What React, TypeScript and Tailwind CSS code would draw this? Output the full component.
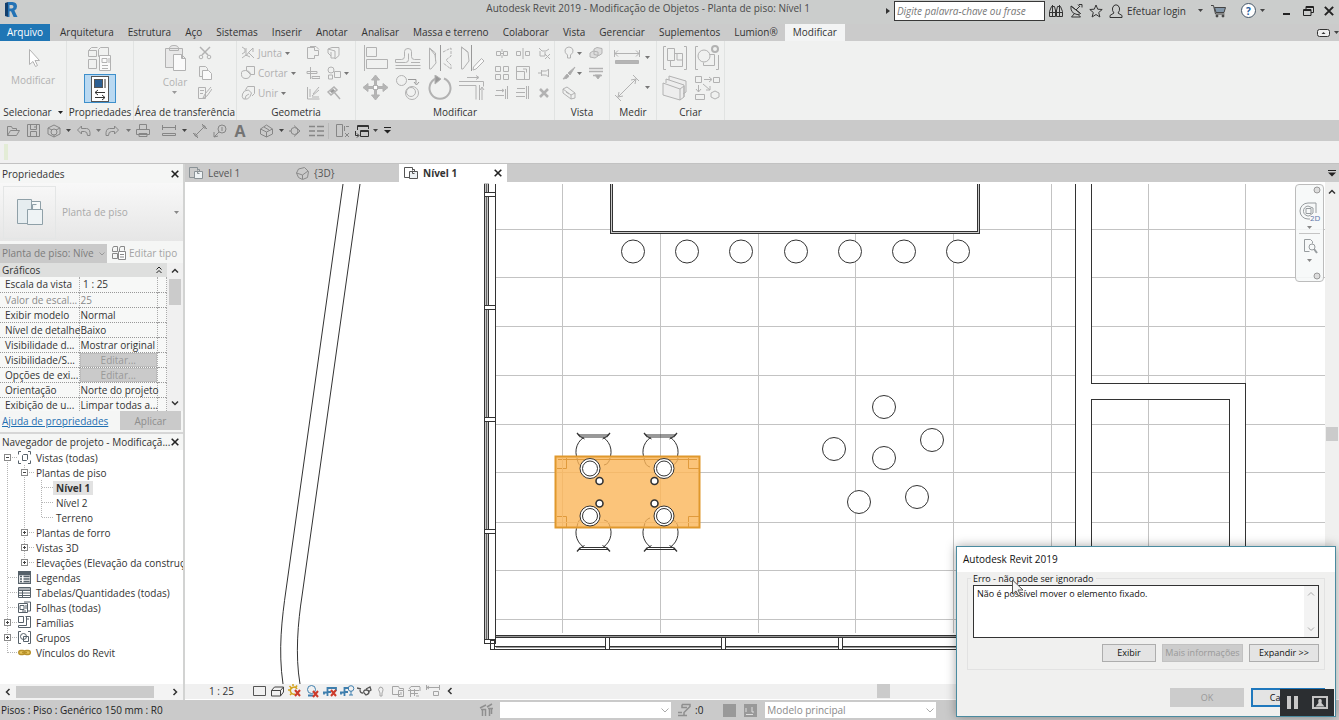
import type { ReactNode } from 'react'

type IconProps = {
  w?: number
  h?: number
  stroke?: string
  fill?: string
  sw?: number
  children: ReactNode
}

function Ic({ w = 16, h = 16, stroke = '#b2b2b2', fill = 'none', sw = 1, children }: IconProps) {
  return (
    <svg
      width={w}
      height={h}
      viewBox={`0 0 ${w} ${h}`}
      stroke={stroke}
      fill={fill}
      strokeWidth={sw}
      className="block shrink-0"
      aria-hidden="true"
    >
      {children}
    </svg>
  )
}

function Caret({ color = '#444444' }: { color?: string }) {
  return (
    <Ic w={5} h={3} stroke="none" fill={color}>
      <path d="M0 0h5L2.5 3z" />
    </Ic>
  )
}

function Close({ size = 8 }: { size?: number }) {
  return (
    <svg width={size} height={size} viewBox="0 0 8 8" stroke="#222" strokeWidth="1.6" aria-hidden="true">
      <path d="M.7.7l6.6 6.6M7.3.7L.7 7.3" />
    </svg>
  )
}

function PlanIcon({ stroke = '#8a9296' }: { stroke?: string }) {
  return (
    <Ic w={14} h={14} stroke={stroke}>
      <path d="M5.5 11.5h-5v-10h8v3M8.5 3.500h2v2" />
      <path d="M5.500 5.500h8v7h-8zM8.500 5.500v2h2" fill="#eef2f4" />
    </Ic>
  )
}

/* ---------- title bar ---------- */

function TitleBar() {
  return (
    <header className="flex h-6 shrink-0 items-start bg-[#cbcdcc]">
      <svg width="14" height="16" viewBox="0 0 14 16" className="mt-0.5 ml-1" aria-hidden="true">
        <path d="M1 1l3-1v15l-3-1z" fill="#123f6d" />
        <path d="M4 0h4.500q4.500.3 4.500 4.500 0 3-2.600 4L13.500 15H9.600L7 9.300H5.500V15H4zM5.500 3v3.500h2.300q1.700-.2 1.700-1.800T7.800 3z" fill="#2473b5" fillRule="evenodd" />
      </svg>
      <h1 className="flex-1 truncate pr-[76px] text-right leading-4 text-[#4a4a4a]">
        Autodesk Revit 2019 - Modificação de Objetos - Planta de piso: Nível 1
      </h1>
      <div className="flex h-[21px] items-center">
        <Ic w={4} h={6} stroke="none" fill="#333">
          <path d="M0 0l4 3-4 3z" />
        </Ic>
        <input
          type="text"
          aria-label="Pesquisar"
          placeholder="Digite palavra-chave ou frase"
          className="mt-px ml-1 h-5 w-[151px] border border-[#383838] bg-white px-0.5 italic placeholder:text-[#777]"
        />
        <button aria-label="Pesquisar" className="ml-1">
          <Ic w={14} h={14} stroke="#333">
            <path d="M.5 12.500v-5l2-5h3l1 4v6zM13.500 12.500v-5l-2-5h-3l-1 4v6zM.5 8.500h6M7.500 8.500h6M3.500 1v11M10.500 1v11M6 6.500h2" />
          </Ic>
        </button>
        <button aria-label="Comunicação" className="ml-1.5">
          <Ic w={14} h={14} stroke="#333">
            <path d="M2 2q-1 7 6 8.500 3 0 3.500-1zM2 2l9.500 7.500M7 6l4-4M10 .5h3v3M9 .5L11 3M5.500 9.500L2.500 13h9L9 10.500" />
          </Ic>
        </button>
        <button aria-label="Favoritos" className="ml-1.5">
          <Ic w={14} h={14} stroke="#333">
            <path d="M7 1l1.700 4.200 4.500.3-3.500 3 1.200 4.500L7 10.500 3.100 13l1.200-4.500-3.500-3 4.500-.3z" />
          </Ic>
        </button>
        <button className="ml-1.5 flex items-center gap-1 text-[#333]">
          <Ic w={14} h={14} stroke="#333">
            <path d="M5 9Q3 7 3.500 4 4.500.8 7 .8T10.500 4Q11 7 9 9M5 9l-4 2.500V13.500h12V11.500L9 9" />
          </Ic>
          Efetuar login
        </button>
        <button aria-label="Opções de login" className="ml-3">
          <Caret />
        </button>
        <button aria-label="Loja" className="ml-2">
          <Ic w={16} h={14} stroke="#444">
            <path d="M0 1.500h2.500l2 8.500h9" />
            <path d="M3.500 3.500h11l-1.500 5H5z" fill="#8296a8" />
            <circle cx="6" cy="12" r="1" fill="#333" />
            <circle cx="12" cy="12" r="1" fill="#333" />
          </Ic>
        </button>
        <button
          aria-label="Ajuda"
          className="ml-3.5 flex size-[15px] items-center justify-center rounded-full border border-[#445566] bg-white font-bold leading-none text-[#1d5c9c]"
        >
          ?
        </button>
        <button aria-label="Opções de ajuda" className="ml-1">
          <Caret />
        </button>
        <button aria-label="Minimizar" className="ml-[18px]">
          <Ic w={8} h={10} stroke="#222" sw={2}>
            <path d="M0 8h7" />
          </Ic>
        </button>
        <button aria-label="Restaurar" className="ml-3">
          <Ic w={11} h={10} stroke="#222">
            <path d="M3 4V.5h7.500v6H8M3 1.500h7M.5 3.500H8v6H.5zM.5 4.500H8" />
          </Ic>
        </button>
        <button aria-label="Fechar" className="mr-[5px] ml-2.5">
          <Close size={10} />
        </button>
      </div>
    </header>
  )
}

const tabs = [
  'Arquitetura', 'Estrutura', 'Aço', 'Sistemas', 'Inserir', 'Anotar', 'Analisar', 'Massa e terreno',
  'Colaborar', 'Vista', 'Gerenciar', 'Suplementos', 'Lumion®',
]

function RibbonTabs() {
  return (
    <nav className="flex h-[17px] shrink-0 items-stretch bg-[#cbcbcb] text-[#333]">
      <button className="w-[50px] bg-[#1f76b5] pb-0.5 text-white">Arquivo</button>
      <div className="flex pl-[3px]">
        {tabs.map((t) => (
          <button key={t} className="px-[7px] pb-0.5">
            {t}
          </button>
        ))}
        <button className="bg-[#f3f4f4] px-2 pb-0.5">Modificar</button>
      </div>
      <button aria-label="Minimizar faixa" className="ml-auto flex items-center gap-1">
        <Ic w={13} h={9} stroke="#333">
          <rect x=".5" y="1.500" width="12" height="7" rx="2" fill="#eee" />
          <path d="M4.500 6h4l-2-2z" fill="#333" stroke="none" />
        </Ic>
        <Caret />
      </button>
    </nav>
  )
}

/* ---------- ribbon ---------- */

function Panel({ label, width, caret, children }: { label: string; width: string; caret?: boolean; children: ReactNode }) {
  return (
    <section className={`flex shrink-0 flex-col border-r border-[#e1e3e2] ${width}`}>
      <div className="flex h-[63px] justify-center pt-0.5">{children}</div>
      <div className="flex h-4 items-center justify-center gap-1.5 whitespace-nowrap text-[#333]">
        {label}
        {caret && <Caret color="#222" />}
      </div>
    </section>
  )
}

function Tool({ label, size = 'size-5', children }: { label: string; size?: string; children: ReactNode }) {
  return (
    <button aria-label={label} className={`flex items-center justify-center ${size}`}>
      {children}
    </button>
  )
}

const bigTools: [string, ReactNode][] = [
  ['Alinhar', <path d="M1.500 0v26M3.500 2.500h10v9h-10zM3.500 14.500h21v9h-21z" />],
  ['Deslocamento', <path d="M.5 14.500h6q3 0 3-3v-5q0-3 3.500-3t3.500 3v5q0 3 3 3h6M.5 14.500v3h10q3 0 3-3v-6M.5 20.500h25M.5 23.500h25M16 17.500h9" />],
  ['Espelhar eixo', <><path d="M2.500 3v21h1.500l5-6-1-8zM2.500 3l6 5v8" /><path d="M13.500 0v26" stroke="#999" /><path d="M16 7l8-4v8l-5 4 5 5v4l-8-6" strokeDasharray="3 1" /></>],
  ['Espelhar desenho', <><path d="M2.500 2v22h1.500l6-8-1-9zM2.500 2l6 5" /><path d="M12.500 0v26" stroke="#999" /><path d="M14.500 22l8-8.500 2.500 2.500-8 8-3 1z" fill="#fafafa" /></>],
  ['Mover', <><path d="M12.500 0l4 5h-3v5h-2V5h-3zM12.500 25l4-5h-3v-5h-2v5h-3zM0 12.500l5-4v3h5v2H5v3zM25 12.500l-5-4v3h-5v2h5v3z" fill="#b5b5b5" /><rect x="10.500" y="10.500" width="4" height="4" fill="#fff" /></>],
  ['Copiar', <><circle cx="6.500" cy="5.500" r="5" /><path d="M13 4.500h8v4M19 7l2.500 3L24 7" stroke="#999" /><circle cx="17" cy="18" r="6.500" /><circle cx="16" cy="17" r="4.500" /></>],
  ['Rotacionar', <><path d="M9 3.500a10.500 10.500 0 1 0 8 0" strokeWidth="2" /><path d="M8 0l6 4-6 5z" fill="#999" /></>],
  ['Aparar', <path d="M8 2.500h11M17 .5l3 2-3 2M0 6.500h24.500v5M0 10.500h17v14M20.500 10v15M23 25V13M21 15l2-3 2 3" />],
]

const smallTools: [string, ReactNode][] = [
  ['Dividir', <path d="M1.500 5.500h4v4h-4zM8.500 5.500h4v4h-4zM5.500 7.500h3M7 3v3M7 9v3" />],
  ['Dividir com folga', <path d="M.5 5.500h4v4h-4zM9.500 5.500h4v4h-4zM7 2v11" />],
  ['Desafixar', <path d="M2 2l3 3h4l3-2M3 5v5h5V6M8 8l5 5M13 8l-5 5" />],
  ['Matriz', <path d="M.5.5h5v5h-5zM8.500.5h5v5h-5zM.5 8.500h5v5h-5zM8.500 8.500h5v5h-5z" />],
  ['Escala', <path d="M.5.5h13v13H.5zM.5 5.500h8v8M10.500 3v3.500M10.500 3H7" />],
  ['Fixar', <path d="M1 7h3M4.500 4v6M4.500 5h5l2-2v8l-2-2h-5" />],
  ['Aparar único', <path d="M1 4.500h8M7 3l2 1.500L7 6M0 9.500h9M12.500 0v13M10.500 3v10" />],
  ['Aparar múltiplo', <path d="M1 2.500h8M0 6.500h9M0 10.500h9M12.500 0v13M10.500 0v13" />],
  ['Excluir', <path d="M3 3l8 8M11 3l-8 8" strokeWidth="2.500" />],
]

function Ribbon() {
  return (
    <div className="flex h-[79px] shrink-0 bg-[#f0f1f0]">
      <Panel label="Selecionar" width="w-[67px]" caret>
        <button className="flex w-full flex-col items-center pt-1 text-[#b2b2b2]">
          <Ic w={16} h={24}>
            <path d="M4.500 2.500v15l3.500-3 2.500 5 2-1-2.500-5h4.500z" fill="#fff" />
          </Ic>
          <span className="mt-0.5">Modificar</span>
        </button>
      </Panel>
      <Panel label="Propriedades" width="w-[67px]">
        <div className="flex flex-col items-center gap-px pt-0.5">
          <Tool label="Propriedades de tipo" size="h-7 w-8">
            <Ic w={26} h={26}>
              <path d="M1.500 4.500h8v6h-8zM1.500 13.500h8v9h-8zM11.500 3.500l2-2h8v8M11.500 3.500v7h3M1.500 4.500l3-3h6" />
              <path d="M12.500 9.500h11v15h-11z" fill="#fafafa" />
              <path d="M15 12.500h5v4h-5zM15 19.500h6M15 22.500h6M22 12v5" />
            </Ic>
          </Tool>
          <button aria-label="Propriedades" className="flex h-[29px] w-8 items-center justify-center border border-[#3d8fcb] bg-[#b9d9f2]">
            <Ic w={18} h={26} stroke="#555">
              <rect x=".5" y=".5" width="17" height="25" fill="#fff" />
              <rect x="3.500" y="3.500" width="8" height="8" fill="#2c5f92" />
              <path d="M14 3v9M4 16.500h10M7 14l-3 2.500L7 19M4 21.500h10M11 19l3 2.500-3 2.500" stroke="#333" />
            </Ic>
          </button>
        </div>
      </Panel>
      <Panel label="Área de transferência" width="w-[103px]">
        <div className="flex items-start gap-2 pl-2">
          <button className="flex flex-col items-center pt-0.5 text-[#b2b2b2]">
            <Ic w={24} h={26}>
              <path d="M2.500 3.500h17v19h-17zM6.500 3.500q0-3 4.500-3t4.500 3v2h-9z" fill="#e8e8e8" />
              <path d="M10.500 9.500h8l4 4v12h-12zM18.500 9.500v4h4" fill="#fafafa" />
            </Ic>
            <span className="mt-1 leading-[14px]">Colar</span>
            <span className="mt-0.5">
              <Caret color="#999" />
            </span>
          </button>
          <div className="flex flex-col">
            <Tool label="Recortar">
              <Ic w={14} h={14}>
                <path d="M2 1l8 8M12 1L4 9" strokeWidth="1.500" />
                <circle cx="3" cy="11" r="1.800" />
                <circle cx="11" cy="11" r="1.800" />
              </Ic>
            </Tool>
            <Tool label="Copiar">
              <Ic w={14} h={14}>
                <path d="M4.500 10.500h-3v-10h6l2 2v2" />
                <path d="M4.500 4.500h6l3 3v6h-9z" fill="#fafafa" />
              </Ic>
            </Tool>
            <Tool label="Corresponder propriedades">
              <Ic w={14} h={14}>
                <path d="M.5 1.500h7v11h-7zM2 4.500h4M2 7.500h3M13 1L7 8l-2 4 4-2 5-7" />
              </Ic>
            </Tool>
          </div>
        </div>
      </Panel>
      <Panel label="Geometria" width="w-[119px]">
        <div className="flex w-full pl-1">
          <div className="flex w-[62px] flex-col text-[#b0b0b0]">
            <button className="flex h-5 items-center gap-[3px]">
              <Ic w={14} h={14}>
                <path d="M1 1l3 2v3l-3 2M1 12l4-3 4 2M5 2v8l3-4 4-4M8 7l5 5M12 2v4" />
              </Ic>
              Junta <Caret color="#777" />
            </button>
            <button className="flex h-5 items-center gap-[3px]">
              <Ic w={14} h={14}>
                <path d="M5.500 4V.5h8v8H10M.5 6.500q0-2 4-2t5 3q0 5-4.500 5t-4.500-4zM5 4l4 4" />
              </Ic>
              Cortar <Caret color="#777" />
            </button>
            <button className="flex h-5 items-center gap-[3px]">
              <Ic w={14} h={14}>
                <path d="M4.500 4l2-3.500h7v7L11 10M1.500 8q1-4 6-4l3 3q-1 4-4 6h-4q-2-2-1-5zM4 13q0-4 4-5" />
              </Ic>
              Unir <Caret color="#777" />
            </button>
          </div>
          <div className="grid grid-cols-[21px_20px_8px] content-start items-center">
            <Tool label="Recorte">
              <Ic w={14} h={14}><path d="M1.500 1.500h7v3h4v5h-4v3h-7zM4 .5h6l3 3" /></Ic>
            </Tool>
            <Tool label="Telhado">
              <Ic w={14} h={14}><path d="M1 3l4-1.500h7v8l-4 3.500V5L1 3zM1 3v4l3 3M4 6v6h4" /></Ic>
            </Tool>
            <span />
            <Tool label="Viga">
              <Ic w={14} h={14}><path d="M4.500 1v12M1 5.500h10v2H1zM6 10.500h8v2H6z" /></Ic>
            </Tool>
            <Tool label="Face dividida">
              <Ic w={14} h={14}><circle cx="4" cy="4" r="3" /><path d="M7.500 5.500h6v6h-6zM1.500 9v4h4v-4z" /></Ic>
            </Tool>
            <Caret color="#777" />
            <Tool label="Parede">
              <Ic w={14} h={14}><path d="M1.500 1v12h12M4 3v8M7 8l6-7M6 10l7-6M6 11h7" /></Ic>
            </Tool>
            <Tool label="Demolir">
              <Ic w={14} h={14}><path d="M1 6l6-5 3 3-6 5zM7 6l6 7" strokeWidth="1.500" /><path d="M3 5l3-2 2 2-3 2z" fill="#999" /></Ic>
            </Tool>
          </div>
        </div>
      </Panel>
      <Panel label="Modificar" width="w-[199px]">
        <div className="flex w-full pl-1.5">
          <div className="grid grid-cols-4 content-start gap-x-1 gap-y-px">
            {bigTools.map(([label, d]) => (
              <Tool key={label} label={label} size="h-[29px] w-7">
                <Ic w={26} h={26}>{d}</Ic>
              </Tool>
            ))}
          </div>
          <div className="ml-1.5 grid grid-cols-3 content-start">
            {smallTools.map(([label, d]) => (
              <Tool key={label} label={label} size="h-5 w-[21px]">
                <Ic w={14} h={14}>{d}</Ic>
              </Tool>
            ))}
          </div>
        </div>
      </Panel>
      <Panel label="Vista" width="w-[55px]">
        <div className="grid grid-cols-[18px_9px_20px] content-start items-center">
          <Tool label="Ocultar">
            <Ic w={12} h={14}><path d="M4.500 9q-3-2-2.500-5Q3 1 6 1t4 3q.5 3-2.500 5v3h-3z" /></Ic>
          </Tool>
          <Caret color="#777" />
          <Tool label="Deslocar elementos">
            <Ic w={14} h={14}><path d="M5 3l3-1.500 5 1v5l-3 2-5-1zM1 7l3-2 5 1v4l-3 2-5-1z" fill="#ddd" /></Ic>
          </Tool>
          <Tool label="Substituir gráficos">
            <Ic w={14} h={14}><path d="M13 1L6 7l2 2zM5 8l-4 5q5 0 6-3z" fill="#aaa" /></Ic>
          </Tool>
          <Caret color="#777" />
          <Tool label="Espessura de linha">
            <Ic w={14} h={14}><path d="M0 2.500h14M0 5.500h14M4 9.500h9" strokeWidth="1.500" /><path d="M6 9l3 4 3-4z" fill="#aaa" /></Ic>
          </Tool>
          <Tool label="Caixa de seleção">
            <Ic w={14} h={14}><path d="M1 3l4-2 8 6v5l-4 1-8-6zM1 3l8 6v4M9 9l4-2M4 6l3 2" /></Ic>
          </Tool>
        </div>
      </Panel>
      <Panel label="Medir" width="w-[47px]">
        <div className="grid grid-cols-[28px_8px] content-start items-center gap-x-1 gap-y-px">
          <Tool label="Medir" size="h-[29px] w-7">
            <Ic w={26} h={26}>
              <path d="M1 8.500h24M4 5.500l-3 3 3 3M22 5.500l3 3-3 3M.5 5v7M25.500 5v7" />
              <path d="M1.500 15.500h23v3h-23z" fill="#b5b5b5" />
            </Ic>
          </Tool>
          <Caret color="#777" />
          <Tool label="Cota" size="h-[29px] w-7">
            <Ic w={26} h={26}><path d="M4 22L22 4M22 4l-5 1M22 4l-1 5M4 22l1-5M4 22l5-1M1 20l6 6M19 0l6 6" /></Ic>
          </Tool>
          <Caret color="#777" />
        </div>
      </Panel>
      <Panel label="Criar" width="w-[68px]">
        <div className="grid grid-cols-2 content-start gap-x-1 gap-y-px">
          <Tool label="Criar montagem" size="h-[29px] w-7">
            <Ic w={26} h={26}><path d="M4 1.500H1.500v23H4M22 1.500h2.500v23H22M5.500 3.500h7v12h-7zM12.500 8.500h8v13h-12v-6M15 8v7h5" /></Ic>
          </Tool>
          <Tool label="Criar grupo" size="h-[29px] w-7">
            <Ic w={26} h={26}>
              <path d="M4 1.500H1.500v23H4M22 24.500h2.500V10M12.500 9.500h8v11h-11v-3" />
              <circle cx="10" cy="11" r="6" fill="#f0f1f0" /><circle cx="21" cy="4" r="3" strokeWidth="2" />
            </Ic>
          </Tool>
          <Tool label="Criar peças" size="h-[29px] w-7">
            <Ic w={26} h={26}><path d="M7 5V1l17 5v11l-3 2M4 8V4l18 6v12M1 8l17 6v11L1 20zM18 14l4-3v11l-4 3" fill="#ededed" /></Ic>
          </Tool>
          <Tool label="Criar similar" size="h-[29px] w-7">
            <Ic w={26} h={26}><path d="M1.500 1.500h6v6h-6zM19.500 2.500h6v5h-6zM10 4.500h7M15 2l3 2.500L15 7M4.500 10v7M2 14l2.500 3L7 14M9 9l7 6M16 11v4h-4M1.500 19.500h9v5h-9zM17 18l4-2 4 2v4l-4 2-4-2z" /></Ic>
          </Tool>
        </div>
      </Panel>
    </div>
  )
}

/* ---------- quick access ---------- */

function QuickAccess() {
  const s = '#868686'
  return (
    <div className="flex h-[21px] shrink-0 items-center bg-[#cacaca] pl-[7px]">
      <Tool label="Abrir" size="h-5 w-[13px]"><Ic w={13} h={12} stroke={s}><path d="M.5 10.500v-9h4l1 2h4v2M.5 10.500l3-5h9l-3 5z" /></Ic></Tool>
      <Tool label="Salvar" size="ml-[7px] h-5 w-[13px]"><Ic w={13} h={13} stroke={s}><path d="M.5.5h12v12H.5zM3.500.5v5h6v-5M3.500 12.500v-5h6v5M8 2v2" /></Ic></Tool>
      <Tool label="Sincronizar" size="ml-1.5 h-5 w-[15px]"><Ic w={14} h={14} stroke={s}><path d="M1 4l6-3 6 3v6l-6 3-6-3zM1 4l6 3 6-3M7 7v6" /><circle cx="7" cy="8" r="3" fill="#ccc" /></Ic></Tool>
      <span className="ml-[5px]"><Caret /></span>
      <Tool label="Desfazer" size="ml-1.5 h-5 w-[14px]"><Ic w={14} h={12} stroke={s}><path d="M.5 5l4-4v2.500h5q4 0 3.500 7h-2.500q0-4-3-4h-3V9z" /></Ic></Tool>
      <span className="ml-[5px]"><Caret color="#777" /></span>
      <Tool label="Refazer" size="ml-1 h-5 w-[14px]"><Ic w={14} h={12} stroke={s}><path d="M13.500 5l-4-4v2.500h-5Q.5 3.500 1 10.500h2.500q0-4 3-4h3V9z" /></Ic></Tool>
      <span className="ml-[7px]"><Caret color="#777" /></span>
      <Tool label="Imprimir" size="ml-[5px] h-5 w-[14px]"><Ic w={14} h={14} stroke={s}><path d="M3.500 5V.5h7V5M.5 5.500h13v5H.5zM3 9.500h8v3H3z" /></Ic></Tool>
      <Tool label="Medir" size="ml-3 h-5 w-[14px]"><Ic w={14} h={12} stroke={s}><path d="M0 2.500h14M.5 0v5M13.500 0v5M.5 8.500h13v2H.5z" /></Ic></Tool>
      <span className="ml-1.5"><Caret /></span>
      <Tool label="Cota alinhada" size="ml-1.5 h-5 w-[14px]"><Ic w={14} h={14} stroke={s}><path d="M2 12L12 2M9 2h3v3M2 9v3h3M0 9l5 5M9 0l5 5" /></Ic></Tool>
      <Tool label="Identificador" size="ml-1.5 h-5 w-[14px]"><Ic w={14} h={14} stroke={s}><circle cx="9" cy="5" r="4" /><path d="M9 3v4M6 8l-5 5 4-1M1 8v5" /></Ic></Tool>
      <button aria-label="Texto" className="ml-[7px] h-5 w-3 text-base font-bold leading-5 text-[#747474]">A</button>
      <Tool label="Vista 3D padrão" size="ml-3.5 h-5 w-[13px]"><Ic w={13} h={14} stroke={s}><path d="M.5 5l6-4 6 4v5l-6 3-6-3zM.5 5l6 3 6-3M6.500 8v5M4 3l5 3" /></Ic></Tool>
      <span className="ml-1.5"><Caret /></span>
      <Tool label="Corte" size="ml-[5px] h-5 w-[12px]"><Ic w={12} h={12} stroke={s}><circle cx="5.500" cy="6" r="3.500" /><path d="M5 .5L11 6l-6 5.500M0 6h2" /></Ic></Tool>
      <Tool label="Linhas finas" size="ml-2 h-5 w-[15px]"><Ic w={15} h={12} stroke={s}><path d="M0 1.500h6M8 1.500h7M0 6h6M8 6h7M0 10.500h6M8 10.500h7" strokeWidth="1.500" /></Ic></Tool>
      <span className="mx-1 h-4 border-l border-[#b9b9b9]" />
      <Tool label="Fechar janelas ocultas" size="ml-[3px] h-5 w-[14px]"><Ic w={14} h={14} stroke={s}><path d="M.5.5h6v12h-6zM8.500 7v-5M9 9l4 4M13 9l-4 4M10 2.500h3" /></Ic></Tool>
      <Tool label="Alternar janelas" size="ml-[5px] h-5 w-[14px]"><Ic w={14} h={14} stroke="#333"><path d="M2.500 6V1.500h11V5M2.500 2.500h11M5.500 6.500h8v6h-8zM5.500 7.500h8M.5 7v4.500h3M2 9.500l2 2-2 2" /></Ic></Tool>
      <span className="ml-1"><Caret /></span>
      <Tool label="Personalizar" size="ml-1.5 h-5 w-[8px]"><Ic w={8} h={7} stroke="#222"><path d="M0 .5h7" /><path d="M0 3h7L3.500 6.500z" fill="#222" stroke="none" /></Ic></Tool>
    </div>
  )
}

/* ---------- properties ---------- */

const props: { name: string; value: string; kind?: 'off' | 'btn' }[] = [
  { name: 'Escala da vista', value: ' 1 : 25' },
  { name: 'Valor de escal...', value: '25', kind: 'off' },
  { name: 'Exibir modelo', value: 'Normal' },
  { name: 'Nível de detalhe', value: 'Baixo' },
  { name: 'Visibilidade d...', value: 'Mostrar original' },
  { name: 'Visibilidade/S...', value: 'Editar...', kind: 'btn' },
  { name: 'Opções de exi...', value: 'Editar...', kind: 'btn' },
  { name: 'Orientação', value: 'Norte do projeto' },
  { name: 'Exibição de u...', value: 'Limpar todas a...' },
]

function Chevron({ d }: { d: string }) {
  return (
    <Ic w={8} h={8} stroke="#333" sw={1.500}>
      <path d={d} />
    </Ic>
  )
}

function Properties() {
  return (
    <section className="flex h-[268px] shrink-0 flex-col bg-[#f5f6f5]">
      <div className="flex h-[19px] items-center justify-between pr-1 pl-0.5">
        <h2>Propriedades</h2>
        <button aria-label="Fechar propriedades"><Close /></button>
      </div>
      <button className="flex h-[58px] items-center bg-linear-to-b from-[#f8f8f8] to-[#e6e6e6] pr-1 pl-[3px] text-[#a9a9a9]">
        <span className="flex size-[53px] items-center justify-center border border-[#e4e6e6]">
          <Ic w={28} h={28} stroke="#8fa0a8">
            <path d="M1.500 1.500h14v24h-14z" fill="#e6edf0" />
            <path d="M15.500 3.500h9v8h-9z" fill="#f7fafa" />
            <path d="M11.500 11.500h15v15h-15zM16.500 11.500v-5h4" fill="#eef3f5" />
          </Ic>
        </span>
        <span className="ml-1.5 flex-1 text-left">Planta de piso</span>
        <Caret color="#888" />
      </button>
      <div className="mt-0.5 flex h-5 items-center">
        <span className="relative h-[19px] w-[107px]">
          <select
            aria-label="Instância"
            disabled
            className="h-full w-full appearance-none overflow-hidden bg-[#c9c9c9] pr-2 pl-0.5 text-[#7c7c7c]"
          >
            <option>Planta de piso: Níve</option>
          </select>
          <svg width="6" height="4" viewBox="0 0 6 4" className="absolute top-2 right-0.5" stroke="#999" fill="none" aria-hidden="true">
            <path d="M.5.5L3 3 5.500.5" />
          </svg>
        </span>
        <button className="ml-[5px] flex items-center gap-[3px] whitespace-nowrap text-[#a4a4a4]">
          <Ic w={14} h={14} stroke="#888">
            <path d="M.5 2.500l1-2h4v5h-5zM.5 7.500h5v5h-5zM7.500 2.500l1-2h4v4M7.500 2.500v3" />
            <path d="M6.500 5.500h7v8h-7zM8 8.500h4M8 11h4" fill="#fff" />
          </Ic>
          Editar tipo
        </button>
      </div>
      <div className="flex h-[148px] overflow-hidden">
        <div className="min-w-0 flex-1">
          <div className="flex h-3.5 items-center justify-between bg-[#dedfde] pr-[5px] pl-0.5">
            <h3>Gráficos</h3>
            <Ic w={6} h={8} stroke="#222"><path d="M.5 3.500L3 1l2.500 2.500M.5 7L3 4.500 5.500 7" /></Ic>
          </div>
          <table className="w-full table-fixed border-collapse bg-[#f7f8f7]">
            <colgroup>
              <col className="w-[79px]" />
              <col />
              <col className="w-[9px]" />
            </colgroup>
            <tbody>
              {props.map((p) => (
                <tr key={p.name} className="h-[15px] border-b border-dotted border-[#999]">
                  <th
                    scope="row"
                    className={`whitespace-nowrap border-r border-dotted border-[#aaa] py-0 pr-0 pl-[5px] text-left leading-[14px] font-normal ${p.kind === 'off' ? 'text-[#8a8a8a]' : ''}`}
                  >
                    {p.name}
                  </th>
                  <td className={`whitespace-pre border-r border-dotted border-[#aaa] p-0 leading-[14px] ${p.kind === 'off' ? 'text-[#8a8a8a]' : ''}`}>
                    {p.kind === 'btn' ? (
                      <button className="block h-[14px] w-full border border-[#bdbdbd] bg-[#cacaca] leading-3 text-[#999]">{p.value}</button>
                    ) : (
                      <span className="pl-px">{p.value}</span>
                    )}
                  </td>
                  <td className="border-r border-dotted border-[#aaa] p-0" />
                </tr>
              ))}
            </tbody>
          </table>
        </div>
        <div className="flex w-4 shrink-0 flex-col items-center bg-[#f0f0f0] py-1">
          <Chevron d="M1 5.500L4 2.500l3 3" />
          <div className="mt-1 h-[26px] w-3 bg-[#cbcbcb]" />
          <div className="mt-auto"><Chevron d="M1 2.500l3 3 3-3" /></div>
        </div>
      </div>
      <div className="flex h-[19px] items-center justify-between bg-[#f5f6f5] px-0.5">
        <a href="#ajuda" className="text-[#1f6fb2] underline">Ajuda de propriedades</a>
        <button className="h-[19px] w-[61px] bg-[#cacaca] text-[#8d8d8d]">Aplicar</button>
      </div>
    </section>
  )
}

/* ---------- project browser ---------- */

const treeIcons: Record<string, ReactNode> = {
  views: <path d="M3 .5H.5v3M10 .5h2.500v3M3 12.500H.5v-3M10 12.500h2.500v-3M4.500 4.500l1-1h4v5l-1 1h-4z" />,
  legend: <path d="M.5.5h12v12H.5zM.5 3.500h12M2 5.500h2M5.500 5.500h6M2 8h2M5.500 8h6M2 10.500h2M5.500 10.500h6M.5 2h12" strokeWidth="1.300" />,
  table: <path d="M.5 1.500h12v10H.5zM.5 3h12M.5 4.500h12M.5 7h12M.5 9.500h12M4.500 4v8" />,
  sheet: <path d="M.5 2.500h9v9h-9zM2 4.500h4v4H2zM6 1h6.500v9H10M8 4v4M4 10h4" />,
  family: <path d="M.5.5h5v6h-5zM7.500.5h5v11h-12v-2h8v-9M9 3h2" />,
  group: <><path d="M3 .5H.5v12H3M10 .5h2.500v12H10M5.500 5.500h5v5h-5z" /><circle cx="5.500" cy="5.500" r="3" /></>,
  link: <g stroke="#b8912a" strokeWidth="1.500"><rect x=".8" y="4.500" width="6" height="4" rx="2" fill="#e5c45c" /><rect x="6.300" y="4.500" width="6" height="4" rx="2" fill="#e5c45c" /><path d="M4 6.500h5" /></g>,
}

const tree: { text: string; level: 0 | 1 | 2; open?: boolean; icon?: string; selected?: boolean }[] = [
  { text: 'Vistas (todas)', level: 0, open: true, icon: 'views' },
  { text: 'Plantas de piso', level: 1, open: true },
  { text: 'Nível 1', level: 2, selected: true },
  { text: 'Nível 2', level: 2 },
  { text: 'Terreno', level: 2 },
  { text: 'Plantas de forro', level: 1, open: false },
  { text: 'Vistas 3D', level: 1, open: false },
  { text: 'Elevações (Elevação da construç', level: 1, open: false },
  { text: 'Legendas', level: 0, icon: 'legend' },
  { text: 'Tabelas/Quantidades (todas)', level: 0, icon: 'table' },
  { text: 'Folhas (todas)', level: 0, icon: 'sheet' },
  { text: 'Famílias', level: 0, open: false, icon: 'family' },
  { text: 'Grupos', level: 0, open: false, icon: 'group' },
  { text: 'Vínculos do Revit', level: 0, icon: 'link' },
]

const indent = ['pl-1', 'pl-[21px]', 'pl-[38px]']

function Browser() {
  return (
    <section className="flex min-h-0 flex-1 flex-col border-t-2 border-[#d6d6d6] bg-white">
      <div className="flex h-4 items-center justify-between bg-[#f5f6f5] pr-1 pl-0.5">
        <h2 className="whitespace-nowrap">Navegador de projeto - Modificaçã...</h2>
        <button aria-label="Fechar navegador"><Close /></button>
      </div>
      <div className="relative min-h-0 flex-1 overflow-hidden">
        <svg className="absolute inset-0" width="60" height="216" stroke="#b5b5b5" strokeDasharray="1 1" fill="none" aria-hidden="true">
          <path d="M7.500 12v191M24.500 15v98M41.500 30v37.500M8 7.500h9M25 22.500h9M42 37.500h11M42 52.500h11M42 67.500h11M25 82.500h9M25 97.500h9M25 112.500h9M8 127.500h9M8 142.500h9M8 157.500h9M8 172.500h9M8 187.500h9M8 202.500h9" />
        </svg>
        <ul className="relative">
          {tree.map((n) => (
            <li key={n.text} className={`flex h-[15px] items-center whitespace-nowrap ${indent[n.level]}`}>
              {n.open === undefined ? (
                <span className="w-[7px]" />
              ) : (
                <button aria-label={n.open ? 'Recolher' : 'Expandir'}>
                  <Ic w={7} h={7} stroke="#8a8a8a">
                    <rect x=".5" y=".5" width="6" height="6" fill="#fff" />
                    <path d={n.open ? 'M2 3.500h3' : 'M2 3.500h3M3.500 2v3'} stroke="#444" />
                  </Ic>
                </button>
              )}
              {n.icon && (
                <span className="ml-[7px] bg-white">
                  <Ic w={13} h={13} stroke="#56616a">{treeIcons[n.icon]}</Ic>
                </span>
              )}
              <span
                className={
                  n.selected
                    ? 'ml-2 bg-[#e2e2e2] px-[3px] leading-[14px] font-bold'
                    : n.icon
                      ? 'ml-[5px]'
                      : n.level === 1
                        ? 'ml-2'
                        : 'ml-[11px]'
                }
              >
                {n.text}
              </span>
            </li>
          ))}
        </ul>
      </div>
      <div className="flex h-4 items-center gap-1 bg-[#f3f3f3] px-1">
        <Chevron d="M5.500 1l-3 3 3 3" />
        <div className="h-3 w-[138px] bg-[#cbcbcb]" />
        <span className="ml-auto"><Chevron d="M2.500 1l3 3-3 3" /></span>
      </div>
    </section>
  )
}

/* ---------- drawing area ---------- */

const gridX = [562, 660, 758, 855, 953, 1051, 1148, 1245]
const gridY = [229, 277, 326, 375, 424, 472, 522, 570, 619]
const stools = [633, 687, 741, 796, 850, 904, 958]
const loose = [[884, 407], [834, 449], [932, 440], [884, 458], [859, 502], [917, 497]]

function Chair({ x, y, flip }: { x: number; y: number; flip?: boolean }) {
  return (
    <g transform={`translate(${x} ${y})${flip ? ' scale(1 -1)' : ''}`}>
      <path d="M-10 -14A17.500 17.500 0 0 0 -14 11M10 -14A17.500 17.500 0 0 1 14 11" />
      <path d="M-16.500 -18.500l3.500 4M16.500 -18.500l-3.500 4" strokeWidth="1.300" />
      <path d="M-15 -16.500h30M-13 -14.500h26M-13 -15l4 2.500M13 -15l-4 2.500" />
    </g>
  )
}

function FloorPlan() {
  return (
    <svg className="block h-full w-full" role="img" aria-label="Planta de piso Nível 1">
      <g transform="translate(-185 -182)" fill="none" stroke="#333" strokeWidth="1">
        <g stroke="#c3c3c3" shapeRendering="crispEdges">
          {gridX.map((x) => (
            <path key={x} d={`M${x}.5 184V633`} />
          ))}
          {gridY.map((y) => (
            <path key={y} d={`M496 ${y}.5H1325`} />
          ))}
        </g>

        <path d="M343 184L286 590C282 618 278 650 283 684M360 184L302 596C298 622 295 655 300 684" />

        <g shapeRendering="crispEdges">
          <rect x="484" y="183" width="12" height="457" fill="#fff" stroke="none" />
          <rect x="484" y="183" width="5" height="457" fill="#c4c4c4" stroke="none" />
          <path d="M484.500 184V639M488.500 184V639M495.500 184V639" />
          <path d="M486.500 184V639" stroke="#666" />
          {[192, 305, 417, 529].map((y) => (
            <rect key={y} x="484.500" y={y + 0.5} width="11" height="4" fill="#fff" />
          ))}
          <rect x="496" y="636" width="500" height="14" fill="#fff" stroke="none" />
          <path d="M496 635.500H1000M496 637.500H1000M495 646.500H1000M495 649.500H1000" />
          <path d="M496 636.500H1000M496 647.500H1000" stroke="#999" />
          {[606, 722, 839].map((x) => (
            <rect key={x} x={x - 0.5} y="637.500" width="4" height="12" fill="#fff" />
          ))}
          <path d="M484.500 639.500h11v4h-11zM490.500 640.500h4v9h-4z" fill="#fff" />

          <rect x="610" y="182" width="369" height="52" fill="#fff" stroke="none" />
          <path d="M610.500 184V233.500H979.500V184M612.500 184V231.500H977.500V184" />
          <path d="M611.500 184V232.500H978.500V184" stroke="#ccc" />

          <path d="M1075 182h17v201h154v180h-16V399H1092v170H1075z" fill="#fff" stroke="none" />
          <path d="M1075.500 184V570M1091.500 184V383.500H1245.500V570M1091.500 570V399.500H1229.500V570" />
        </g>

        {stools.map((x) => (
          <circle key={x} cx={x} cy="251.500" r="11.500" fill="#fff" />
        ))}
        {loose.map(([x, y]) => (
          <circle key={`${x}-${y}`} cx={x} cy={y} r="11.500" fill="#fff" />
        ))}

        <Chair x={593.5} y={451.5} />
        <Chair x={660.5} y={451.5} />
        <Chair x={593.5} y={533} flip />
        <Chair x={660.5} y={533} flip />
        <rect x="555.500" y="456.500" width="144" height="71" fill="#fbc47a" stroke="#e0982c" strokeWidth="2" />
        <path d="M557 468.500h9.500V458M699 468.500h-10.500V458M557 516.500h9.500V527M699 516.500h-10.500V527M558 459.500h139" stroke="#e09a3c" />
        <path d="M577 458q1 8 6 9M610 458q-1 6-6 7M644 458q1 8 6 9M678 458q-1 6-6 7M577 527q1-8 6-9M610 527q-1-6-6-7M644 527q1-8 6-9M678 527q-1-6-6-7" stroke="#d39a50" />
        <path d="M557 472.500H698M557 522.500H698M562.500 458v68M660.500 458v68" stroke="#f3b96c" />
        {[[590, 468.5], [664, 468.5], [590, 516], [664, 516]].map(([x, y]) => (
          <g key={`${x}-${y}`}>
            <circle cx={x} cy={y} r="10" fill="#fff" />
            <circle cx={x} cy={y} r="7.500" />
          </g>
        ))}
        {[[599.5, 481], [654.5, 481], [599.5, 503.5], [654.5, 503.5]].map(([x, y]) => (
          <circle key={`${x}-${y}`} cx={x} cy={y} r="3.500" fill="#fff" strokeWidth="1.600" />
        ))}
      </g>
    </svg>
  )
}

function NavBar() {
  return (
    <div className="absolute top-0.5 right-px flex h-[98px] w-[29px] flex-col items-center rounded border border-[#bcbcbc] bg-[#f6f8f8]/90 py-px">
      <button aria-label="Fechar barra de navegação" className="mr-0.5 self-end">
        <Ic w={8} h={8} stroke="#999"><circle cx="4" cy="4" r="3" fill="#ddd" /></Ic>
      </button>
      <button aria-label="Roda de navegação" className="mt-[7px]">
        <Ic w={22} h={22} stroke="#979c9f">
          <path d="M9 2h8v10M9 2a8 8 0 0 0 0 16h2" />
          <path d="M9 5a5 5 0 1 0 1 10l4-3V7zM7 7.500h5v5H7z" />
          <text x="11" y="20" fontSize="8" stroke="none" fill="#5f76a8">2D</text>
        </Ic>
      </button>
      <span className="mt-[3px]"><Caret color="#888" /></span>
      <span className="mt-1 w-[21px] border-t border-[#c4c4c4]" />
      <button aria-label="Zoom de região" className="mt-1">
        <Ic w={16} h={16} stroke="#979c9f">
          <path d="M2.500 13.500v-12h6l2 2v2M2.500 13.500h5" />
          <circle cx="10" cy="9" r="3" />
          <path d="M12 11l3 4" strokeWidth="2" />
        </Ic>
      </button>
      <span className="mt-[5px]"><Caret color="#888" /></span>
      <span className="mt-auto mr-0.5 self-end"><Ic w={8} h={8} stroke="#999"><circle cx="4" cy="4" r="3" fill="#ddd" /></Ic></span>
    </div>
  )
}

function DocTabs() {
  return (
    <div className="flex h-[18px] shrink-0 items-stretch bg-[#cbcbcb] text-[#555]">
      <button className="flex w-[107px] items-center gap-[5px] pl-1"><PlanIcon />Level 1</button>
      <button className="flex w-[107px] items-center gap-[5px] pl-1">
        <Ic w={13} h={13} stroke="#8a8a8a"><path d="M.5 6l2-4 6-1.500 4 4-1 6-5 2-4-2zM.5 6l6 2 5.500-4M6.500 8v4" /></Ic>
        {'{3D}'}
      </button>
      <div className="flex w-[108px] items-center bg-white pr-[5px] pl-[5px] font-bold text-[#333]">
        <button className="flex flex-1 items-center gap-[5px]"><PlanIcon stroke="#555" />Nível 1</button>
        <button aria-label="Fechar Nível 1"><Close /></button>
      </div>
      <button aria-label="Lista de vistas" className="ml-auto flex items-center pr-[3px]">
        <Ic w={8} h={7} stroke="#222"><path d="M0 .5h8" /><path d="M0 2.500h8L4 6.500z" fill="#222" stroke="none" /></Ic>
      </button>
    </div>
  )
}

function ViewControls() {
  const b = '#3f7fae'
  const g = '#a5a5a5'
  const x = '#cc3b2b'
  return (
    <div className="flex h-[15px] shrink-0 items-center bg-[#f0f0f0] pb-px pl-6">
      <button className="w-[43px] text-left">1 : 25</button>
      <Tool label="Nível de detalhe" size="h-3.5 w-4"><Ic w={14} h={12} stroke="#555"><path d="M.5 1.500h12v9H.5z" /></Ic></Tool>
      <Tool label="Estilo visual" size="ml-0.5 h-3.5 w-4"><Ic w={14} h={12} stroke="#444"><path d="M.5 5.500l3-3.500h9v5l-3 4h-9zM.5 5.500h9l3-3.500M9.500 5.500v5.500" /></Ic></Tool>
      <Tool label="Caminho do sol" size="ml-px h-3.5 w-4"><Ic w={14} h={14} stroke="#d3a21d"><path d="M7 10a3.500 3.500 0 1 1 2-5M5 0v2M0 6h2M1.500 2L3 3.500M9 1.500L8 3M2 11l1.500-1.500" strokeWidth="1.500" /><path d="M7 6l5 6M12 6l-5 6" stroke={x} strokeWidth="2" /></Ic></Tool>
      <Tool label="Sombras" size="ml-0.5 h-3.5 w-4"><Ic w={14} h={14} stroke={b}><circle cx="5.500" cy="5.500" r="4" /><path d="M2 11.500h5" strokeWidth="2" /><path d="M7 7l5 6M12 7l-5 6" stroke={x} strokeWidth="2" /></Ic></Tool>
      <Tool label="Recortar vista" size="ml-px h-3.5 w-4"><Ic w={15} h={14} stroke={b}><path d="M4.500 3v9M0 8.500h5M5 4h8v3M5 8h3M1 7.500v3" strokeWidth="1.800" /><path d="M8 6l5 6M13 6l-5 6" stroke={x} strokeWidth="2" /></Ic></Tool>
      <Tool label="Região de recorte" size="ml-px h-3.5 w-4"><Ic w={15} h={14} stroke={b}><path d="M4.500 3v9M0 8.500h5M5 4h4M5 8h3M1 7.500v3" strokeWidth="1.800" /><circle cx="11" cy="4.500" r="2.800" /><path d="M11 7v4M9 11h4" /></Ic></Tool>
      <Tool label="Ocultar isolar" size="ml-px h-3.5 w-4"><Ic w={15} h={12} stroke="#555"><path d="M0 3l4 1M7 8q-1-3 2-3t3 2-3 3zM3 5q0 3 3 3M9 4l4-2 1 3-3 2" strokeWidth="1.300" /></Ic></Tool>
      <Tool label="Revelar ocultos" size="ml-px h-3.5 w-4"><Ic w={8} h={12} stroke={g}><path d="M3 8Q0 4 3 2q3 0 3 2.500Q6 6 5 8v3H3z" /></Ic></Tool>
      <Tool label="Propriedades temporárias" size="ml-px h-3.5 w-4"><Ic w={13} h={12} stroke={g}><path d="M8 9.500H.5v-8h6l1 2h4V5M6.500 5.500h5v6h-5zM9 7v3" /></Ic></Tool>
      <Tool label="Modelo analítico" size="h-3.5 w-4"><Ic w={13} h={12} stroke={g}><path d="M1 4l2-2.500h9M0 5.500h11M2.500 4v8M6.500 4v7M2 8.500h8M12 2v4M8 11h3" /></Ic></Tool>
      <Tool label="Restrições" size="ml-[3px] h-3.5 w-4"><Ic w={14} h={12} stroke={g}><path d="M.5 0v5M.5 2.500h13M13.500 0v5M7.500 6.500h5v4h-5zM3 1L1 2.500 3 4" /></Ic></Tool>
      <span className="ml-[5px]"><Chevron d="M5.500 1l-3 3 3 3" /></span>
      <div className="flex-1">
        <div className="ml-[423px] h-3.5 w-[13px] bg-[#cbcbcb]" />
      </div>
    </div>
  )
}

function StatusBar() {
  const s = '#8f8f8f'
  return (
    <footer className="flex h-5 shrink-0 items-center bg-[#cacaca] pl-px text-[#222]">
      <span className="w-[478px]">Pisos : Piso : Genérico 150 mm : R0</span>
      <Ic w={15} h={14} stroke={s}><path d="M1 5l6-3M2 6.500h5M3.500 6v7M6.500 6v7M8 4l5-3M9 5.500h5M10.500 5v8M12.500 5v6" strokeWidth="1.500" /></Ic>
      <span className="relative ml-1.5 h-4 w-[171px]">
        <select aria-label="Conjunto de trabalho" className="h-full w-full appearance-none bg-white" />
        <svg width="8" height="5" viewBox="0 0 8 5" className="absolute top-1.5 right-0.5" stroke="#aaa" fill="none" aria-hidden="true"><path d="M.5.5L4 4 7.500.5" /></svg>
      </span>
      <span className="ml-[7px] flex items-center gap-1">
        <Ic w={13} h={14} stroke={s}><path d="M4 1.500h8v2L6 9.500v3M4 1.500v3h5M0 9.500h4M0 12.500h9" strokeWidth="1.500" /></Ic>
        :0
      </span>
      <span className="ml-5"><Ic w={13} h={13} stroke="none" fill="#999"><path d="M0 0h13v13H0z" /></Ic></span>
      <span className="mr-2 ml-2"><Ic w={13} h={13} stroke="#ddd" fill="#999"><path d="M0 0h13v13H0z" stroke="none" /><path d="M2 10.500h7M2 8V4M8 3v5h2" /></Ic></span>
      <span className="relative h-4 w-[171px]">
        <select aria-label="Opção de projeto" className="h-full w-full appearance-none bg-white pl-0.5 text-[#8a8a8a]">
          <option>Modelo principal</option>
        </select>
        <svg width="8" height="5" viewBox="0 0 8 5" className="absolute top-1.5 right-0.5" stroke="#aaa" fill="none" aria-hidden="true"><path d="M.5.5L4 4 7.500.5" /></svg>
      </span>
    </footer>
  )
}

/* ---------- error dialog ---------- */

function ErrorDialog() {
  return (
    <div
      role="dialog"
      aria-label="Autodesk Revit 2019"
      className="absolute right-[3px] bottom-[3px] w-[380px] border border-[#4a8ba0] bg-[#f0f0ef] text-[9px] text-[#111] shadow-[0_0_10px_rgba(0,0,0,0.35)]"
    >
      <h2 className="h-[25px] bg-white pl-1.5 text-[10px] leading-6">Autodesk Revit 2019</h2>
      <div className="px-2.5">
        <fieldset className="h-[98px] border border-[#e2e2e2] px-[5px]">
          <legend className="-ml-0.5 px-0.5 leading-[13px]">Erro - não pode ser ignorado</legend>
          <div className="flex h-[53px] border border-[#333] bg-white">
            <p className="flex-1 pt-px pl-[3px] leading-[14px]">Não é possível mover o elemento fixado.</p>
            <div className="flex w-[14px] flex-col items-center justify-between bg-[#f3f3f3] py-1">
              <Ic w={8} h={8} stroke="#aaa"><path d="M1 5.500L4 2.500l3 3" /></Ic>
              <Ic w={8} h={8} stroke="#aaa"><path d="M1 2.500l3 3 3-3" /></Ic>
            </div>
          </div>
          <div className="mt-1.5 flex justify-end gap-1.5">
            <button className="h-[18px] w-[54px] border border-[#adadad] bg-[#e4e4e4]">Exibir</button>
            <button disabled className="h-[18px] w-[81px] border border-[#c2c2c2] bg-[#cccccc] text-[#999]">Mais informações</button>
            <button className="h-[18px] w-[70px] border border-[#adadad] bg-[#e4e4e4]">Expandir &gt;&gt;</button>
          </div>
        </fieldset>
        <div className="mt-[18px] mb-[9px] flex justify-end gap-[7px]">
          <button disabled className="h-[19px] w-[74px] bg-[#cccccc] text-[#999]">OK</button>
          <button className="h-[19px] w-[74px] border-2 border-[#1f78bd] bg-[#e4e4e4]">Cancelar</button>
        </div>
      </div>
      <div className="absolute right-px bottom-0 flex h-[27px] w-[54px] items-center justify-around bg-[#2b2e31]">
        <button aria-label="Pausar">
          <Ic w={12} h={13} stroke="none" fill="#c9c9c9"><path d="M0 0h4v13H0zM7 0h4v13H7z" /></Ic>
        </button>
        <button aria-label="Apresentador">
          <Ic w={16} h={13} stroke="#c4c4c4" sw={2}>
            <path d="M1 1h14v11H1z" />
            <path d="M8 3q2.500 0 1.500 4l3 3.500h-9l3-3.500Q5.500 3 8 3z" fill="#c9c9c9" stroke="none" />
          </Ic>
        </button>
      </div>
      <svg width="14" height="20" viewBox="0 0 14 20" className="absolute top-8 left-[54px]" aria-hidden="true">
        <path d="M1.500 1v14l3.500-3 2.500 5 2-1-2.500-5h5z" fill="#f6f6f6" stroke="#555" />
      </svg>
    </div>
  )
}

export default function App() {
  return (
    <div className="relative flex h-screen min-w-0 flex-col overflow-hidden bg-white font-['Open_Sans','Noto_Sans',sans-serif] text-[10px] leading-[14px] text-[#333]">
      <TitleBar />
      <RibbonTabs />
      <Ribbon />
      <QuickAccess />
      <div className="flex h-[23px] shrink-0 border-b border-[#c2c2c2] bg-[#f0f0f0]">
        <span className="my-[3px] ml-1 w-1 bg-[#e3ecd6]" />
      </div>
      <main className="flex min-h-0 flex-1">
        <aside className="flex w-[185px] shrink-0 flex-col border-r-2 border-[#d2d3d2]">
          <Properties />
          <Browser />
        </aside>
        <div className="flex min-w-0 flex-1 flex-col">
          <DocTabs />
          <div className="flex min-h-0 flex-1">
            <div className="relative min-w-0 flex-1 overflow-hidden bg-white">
              <FloorPlan />
              <NavBar />
            </div>
            <div className="flex w-3.5 shrink-0 flex-col items-center bg-[#f0f0ef] pt-1.5">
              <Chevron d="M1 5.500L4 2.500l3 3" />
              <div className="mt-[231px] h-3.5 w-3 bg-[#cbcbcb]" />
            </div>
          </div>
          <ViewControls />
          <div className="h-px shrink-0 bg-white" />
        </div>
      </main>
      <StatusBar />
      <ErrorDialog />
    </div>
  )
}
